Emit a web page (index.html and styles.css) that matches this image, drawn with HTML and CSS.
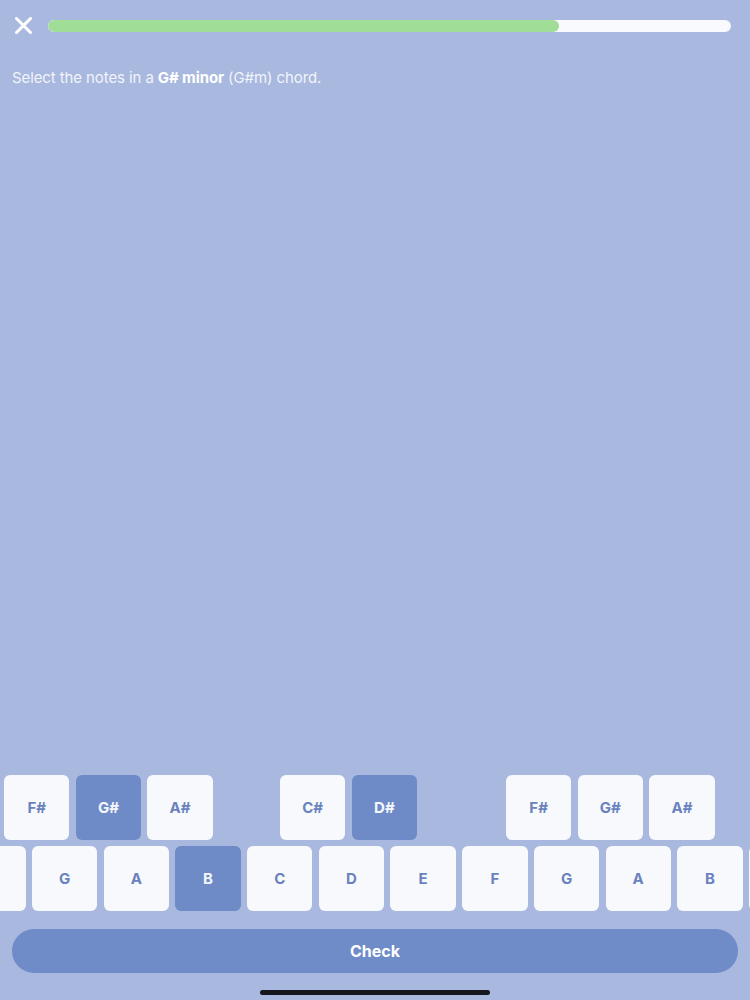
FILE: index.html
```html
<!DOCTYPE html>
<html lang="en">
<head>
<meta charset="utf-8">
<title>Chord quiz</title>
<link rel="stylesheet" href="styles.css">
</head>
<body>
<div class="screen">
  <header class="topbar">
    <button class="close" aria-label="Close">
      <svg viewBox="0 0 17 17" width="17" height="17"><path d="M1.5 1.5L15.5 15.5M15.5 1.5L1.5 15.5" stroke="#ffffff" stroke-width="3" stroke-linecap="round" fill="none"/></svg>
    </button>
    <div class="progress"><div class="progress-fill" style="width:74.8%"></div></div>
  </header>
  <p class="prompt">Select the notes in a <strong>G# minor</strong> (G#m) chord.</p>
  <div class="spacer"></div>
  <div class="keyboard">
    <div class="row row-black">
      <div class="group group-1">
        <div class="key">F#</div>
        <div class="key selected">G#</div>
        <div class="key">A#</div>
      </div>
      <div class="group group-2">
        <div class="key">C#</div>
        <div class="key selected">D#</div>
      </div>
      <div class="group group-3">
        <div class="key">F#</div>
        <div class="key">G#</div>
        <div class="key">A#</div>
      </div>
    </div>
    <div class="row row-white">
      <div class="key" aria-label="F"></div>
      <div class="key">G</div>
      <div class="key">A</div>
      <div class="key selected">B</div>
      <div class="key">C</div>
      <div class="key">D</div>
      <div class="key">E</div>
      <div class="key">F</div>
      <div class="key">G</div>
      <div class="key">A</div>
      <div class="key">B</div>
      <div class="key" aria-label="C"></div>
    </div>
  </div>
  <div class="actions">
    <button class="check">Check</button>
  </div>
  <footer class="home"><div class="home-bar"></div></footer>
</div>
</body>
</html>
```
FILE: styles.css
```css
html, body {
  margin: 0;
  padding: 0;
}
body {
  background: #a9b8de;
  font-family: "Inter", "Noto Sans", sans-serif;
}
.screen {
  height: 1000px;
  display: flex;
  flex-direction: column;
  overflow: hidden;
}
.topbar {
  height: 50px;
  display: flex;
  align-items: center;
  padding: 1px 19px 0 15px;
  box-sizing: border-box;
  gap: 16px;
}
.close {
  width: 17px;
  height: 17px;
  padding: 0;
  margin: 0;
  border: 0;
  background: none;
  display: flex;
}
.progress {
  flex: 1;
  height: 12px;
  border-radius: 6px;
  background: #f8fafd;
  overflow: hidden;
}
.progress-fill {
  height: 100%;
  background: #a0dd97;
  border-radius: 6px;
}
.prompt {
  margin: 18px 0 0 12px;
  font-size: 15px;
  line-height: 20px;
  color: #f1f4fb;
  letter-spacing: -0.1px;
}
.prompt strong {
  color: #ffffff;
  font-weight: 700;
}
.spacer {
  flex: 1;
}
.keyboard {
  display: flex;
  flex-direction: column;
  gap: 6px;
  margin-bottom: 18px;
}
.row {
  display: flex;
  gap: 6.3px;
}
.group {
  display: flex;
  gap: 6.3px;
}
.group-1 { margin-left: 4px; }
.group-2 { margin-left: 60.9px; }
.group-3 { margin-left: 82.6px; }
.row-white {
  margin-left: -39.7px;
}
.key {
  flex: 0 0 auto;
  width: 65.4px;
  height: 65px;
  border-radius: 6px;
  background: #f8f9fc;
  color: #6a83bf;
  font-size: 15px;
  font-weight: 700;
  display: flex;
  align-items: center;
  justify-content: center;
}
.key.selected {
  background: #6e8bc7;
  color: #f4f6fc;
}
.actions {
  padding: 0 12px;
}
.check {
  width: 100%;
  height: 44px;
  border: 0;
  border-radius: 22px;
  background: #6f8cc8;
  color: #ffffff;
  font-family: "Inter", "Noto Sans", sans-serif;
  font-size: 16px;
  font-weight: 700;
  display: block;
}
.home {
  height: 27px;
  display: flex;
  justify-content: center;
  padding-top: 17px;
  box-sizing: border-box;
}
.home-bar {
  width: 230px;
  height: 5px;
  border-radius: 3px;
  background: #16171c;
}
```
